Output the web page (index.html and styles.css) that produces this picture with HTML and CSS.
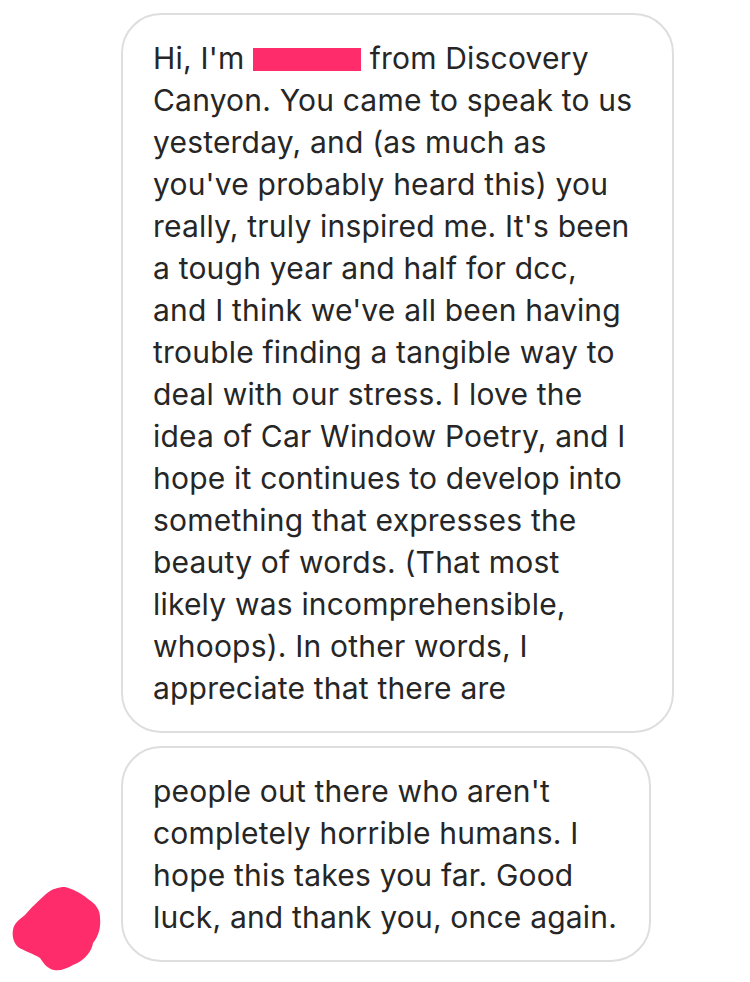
FILE: index.html
```html
<!DOCTYPE html>
<html>
<head>
<meta charset="utf-8">
<link rel="stylesheet" href="styles.css">
</head>
<body>
<div class="thread">
  <div class="msg">
    <div class="avatar-slot"></div>
    <div class="bubble bubble-first">
      <p class="text">Hi, I'm <span class="redact"></span> from Discovery<br>Canyon. You came to speak to us<br>yesterday, and (as much as<br>you've probably heard this) you<br>really, truly inspired me. It's been<br>a tough year and half for dcc,<br>and I think we've all been having<br>trouble finding a tangible way to<br>deal with our stress. I love the<br>idea of Car Window Poetry, and I<br>hope it continues to develop into<br>something that expresses the<br>beauty of words. (That most<br>likely was incomprehensible,<br>whoops). In other words, I<br>appreciate that there are</p>
    </div>
  </div>
  <div class="msg">
    <div class="avatar-slot">
      <svg class="avatar" width="105" height="95" viewBox="0 0 105 95" aria-hidden="true">
        <path d="M65 7 C72 9 80 12 88 19 C96 24 100 30 100 38 C101 46 99 56 93 63 C92 70 86 80 73 85 C66 89 60 91 54 90 C48 89 44 84 40 78 C34 74 24 71 18 67 C13 62 12 55 13 50 C14 43 19 40 25 35 C30 29 38 21 46 14 C52 9 58 7 65 7 Z" fill="#fe2c6b"/>
      </svg>
    </div>
    <div class="bubble bubble-second">
      <p class="text">people out there who aren't<br>completely horrible humans. I<br>hope this takes you far. Good<br>luck, and thank you, once again.</p>
    </div>
  </div>
</div>
</body>
</html>
```
FILE: styles.css
```css
html, body {
  margin: 0;
  padding: 0;
  background: #ffffff;
}
body {
  font-family: Inter, Roboto, "Liberation Sans", sans-serif;
  color: #262626;
}
.thread {
  display: flex;
  flex-direction: column;
  gap: 13px;
  padding-top: 13px;
}
.msg {
  display: flex;
  align-items: flex-end;
}
.avatar-slot {
  width: 121px;
  flex: none;
  display: flex;
  align-items: flex-end;
}
.avatar {
  display: block;
}
.bubble {
  box-sizing: border-box;
  border: 2px solid #dedede;
  border-radius: 40px;
  padding: 22px 30px 22px 30px;
}
.bubble-first {
  width: 553px;
}
.bubble-second {
  width: 530px;
  margin-bottom: 13px;
}
.text {
  margin: 0;
  font-size: 30px;
  letter-spacing: 0.2px;
  line-height: 42px;
  white-space: nowrap;
}
.redact {
  display: inline-block;
  width: 108px;
  height: 23px;
  background: #fe2c6b;
  vertical-align: -2px;
}
```
